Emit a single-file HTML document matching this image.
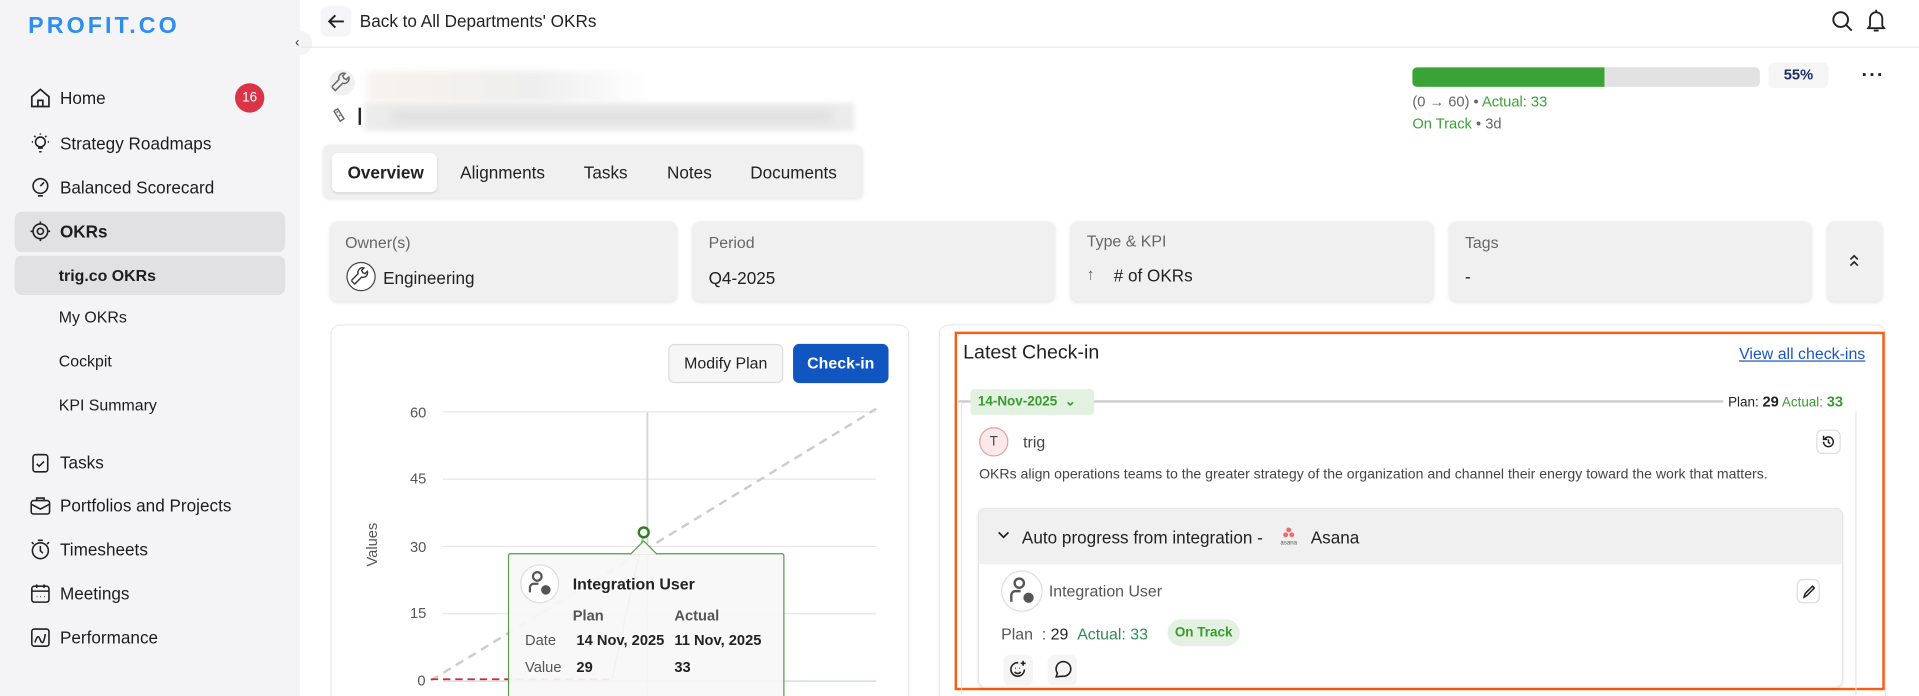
<!DOCTYPE html>
<html><head><meta charset="utf-8"><style>
*{box-sizing:border-box;margin:0;padding:0}
html,body{width:1919px;height:696px;overflow:hidden;background:#fff}
body{font-family:"Liberation Sans",Arial,sans-serif;color:#222}
#w{position:absolute;left:0;top:0;width:1568px;height:569px;transform:scale(1.22385);transform-origin:0 0;overflow:hidden}
.a{position:absolute}
.t{position:absolute;white-space:nowrap;transform:translateY(-50%)}
.side{left:0;top:0;width:245px;height:569px;background:#f4f4f6}
.nav{font-size:14px;color:#1d1d1d;left:49px}
.sub{font-size:13px;color:#1d1d1d;left:48px}
.ic{position:absolute;width:18px;height:18px;transform:translateY(-50%);left:24px}
.card{background:#f0f0f0;border-radius:6px;box-shadow:0 1px 3px rgba(0,0,0,.12);top:181px;height:65px}
.lbl{font-size:13px;color:#666}
.val{font-size:14px;color:#222}
.tab{font-size:14px;color:#222;top:141px}
.grid{position:absolute;left:362px;width:354px;height:1px;background:#e6e6e6}
.yl{font-size:12px;color:#666;right:1212px}
</style></head><body><div id="w">
<div class="a side"></div>
<div class="t" style="left:23px;top:22px;font-size:19px;font-weight:bold;color:#2d8ef0;letter-spacing:2.5px">PR<span style="letter-spacing:2.5px">O</span>FIT.CO</div>
<div class="a" style="left:235px;top:25px;width:20px;height:20px;border-radius:50%;background:#f4f4f6"></div>
<div class="t" style="left:241px;top:35px;font-size:11px;color:#333">‹</div>

<svg class="ic" style="top:80px" viewBox="0 0 18 18" fill="none" stroke="#222" stroke-width="1.4"><path d="M2 8L9 2l7 6v8H2z M7 16v-5h4v5"/></svg>
<div class="t nav" style="top:80px">Home</div>
<div class="a" style="left:192px;top:68px;width:24px;height:24px;border-radius:50%;background:#d93448;color:#fff;font-size:11px;text-align:center;line-height:24px">16</div>
<svg class="ic" style="top:117px" viewBox="0 0 18 18" fill="none" stroke="#222" stroke-width="1.3"><circle cx="9" cy="8" r="4"/><path d="M7 13h4M8 16h2M9 1v1M2 8h1M15 8h1M4 3l1 1M14 3l-1 1"/></svg>
<div class="t nav" style="top:117px">Strategy Roadmaps</div>
<svg class="ic" style="top:153px" viewBox="0 0 18 18" fill="none" stroke="#222" stroke-width="1.3"><circle cx="9" cy="8" r="6"/><path d="M9 8l3-3M7 16h4"/></svg>
<div class="t nav" style="top:153px">Balanced Scorecard</div>
<div class="a" style="left:12px;top:173px;width:221px;height:33px;background:#e1e1e4;border-radius:6px"></div>
<svg class="ic" style="top:189px" viewBox="0 0 18 18" fill="none" stroke="#222" stroke-width="1.3"><circle cx="9" cy="9" r="6"/><circle cx="9" cy="9" r="2.5"/><path d="M9 1v2M9 15v2M1 9h2M15 9h2"/></svg>
<div class="t nav" style="top:189px;font-weight:bold">OKRs</div>
<div class="a" style="left:12px;top:209px;width:221px;height:32px;background:#e1e1e4;border-radius:6px"></div>
<div class="t sub" style="top:225px;font-weight:bold">trig.co OKRs</div>
<div class="t sub" style="top:259px">My OKRs</div>
<div class="t sub" style="top:295px">Cockpit</div>
<div class="t sub" style="top:331px">KPI Summary</div>
<svg class="ic" style="top:378px" viewBox="0 0 18 18" fill="none" stroke="#222" stroke-width="1.3"><rect x="3" y="2.5" width="12" height="14" rx="2"/><path d="M6 2.5h6M6 10l2 2 4-4"/></svg>
<div class="t nav" style="top:378px">Tasks</div>
<svg class="ic" style="top:413px" viewBox="0 0 18 18" fill="none" stroke="#222" stroke-width="1.3"><rect x="1.5" y="5" width="15" height="11" rx="2"/><path d="M6 5V3h6v2M1.5 8l7.5 4 7.5-4"/></svg>
<div class="t nav" style="top:413px">Portfolios and Projects</div>
<svg class="ic" style="top:449px" viewBox="0 0 18 18" fill="none" stroke="#222" stroke-width="1.3"><circle cx="9" cy="10" r="6.5"/><path d="M9 6v4l2 2M7 1.5h4M2 3l1.5 1.5M16 3l-1.5 1.5"/></svg>
<div class="t nav" style="top:449px">Timesheets</div>
<svg class="ic" style="top:485px" viewBox="0 0 18 18" fill="none" stroke="#222" stroke-width="1.3"><rect x="2" y="3" width="14" height="13" rx="2"/><path d="M2 7h14M6 1.5v3M12 1.5v3M6 11.5h.5M9 11.5h.5M12 11.5h.5"/></svg>
<div class="t nav" style="top:485px">Meetings</div>
<svg class="ic" style="top:521px" viewBox="0 0 18 18" fill="none" stroke="#222" stroke-width="1.3"><rect x="2" y="2" width="14" height="14" rx="2"/><path d="M4.5 13c2-6 3-6 4.5-2s3 2 4-5"/></svg>
<div class="t nav" style="top:521px">Performance</div>

<!-- header -->
<div class="a" style="left:262px;top:5px;width:25px;height:25px;background:#f5f5f7;border-radius:6px"></div>
<svg class="a" style="left:267px;top:10px" width="15" height="15" viewBox="0 0 15 15" fill="none" stroke="#222" stroke-width="1.6"><path d="M14 7.5H2M7 2.5l-5 5 5 5"/></svg>
<div class="t" style="left:294px;top:17px;font-size:14px">Back to All Departments' OKRs</div>
<div class="a" style="left:245px;top:38px;width:1323px;height:1px;background:#e8e8e8"></div>
<svg class="a" style="left:1496px;top:8px" width="19" height="19" viewBox="0 0 19 19" fill="none" stroke="#222" stroke-width="1.6"><circle cx="8" cy="8" r="6"/><path d="M12.5 12.5l4.5 4.5"/></svg>
<svg class="a" style="left:1524px;top:6px" width="18" height="21" viewBox="0 0 18 21" fill="none" stroke="#222" stroke-width="1.5"><path d="M9 2v1.5M4 15V9a5 5 0 0110 0v6l1.5 2h-13zM7 19h4"/></svg>

<!-- title -->
<div class="a" style="left:269px;top:57px;width:21px;height:21px;border-radius:50%;background:#f0f0f0"></div>
<svg class="a" style="left:271px;top:59px" width="17" height="17" viewBox="0 0 17 17" fill="none" stroke="#666" stroke-width="1.2"><path d="M3 15l6-6a4 4 0 005-5l-2 2-2-1-1-2 2-2a4 4 0 00-5 5l-6 6z"/></svg>
<svg class="a" style="left:270px;top:86px" width="15" height="15" viewBox="0 0 15 15" fill="none" stroke="#666" stroke-width="1.2"><path d="M3 5l5 8 3-2-5-8-2 1zM5 6l1-1M7 9l1-1"/></svg>
<div class="a" style="left:293px;top:88px;width:1.5px;height:14px;background:#222"></div>
<div class="a" style="left:300px;top:58px;width:230px;height:26px;background:linear-gradient(90deg,#f7f3ee,#eeeeee 60%,#fff);filter:blur(3px)"></div>
<div class="a" style="left:298px;top:84px;width:400px;height:23px;background:#ececec;filter:blur(2px)"></div>
<div class="a" style="left:320px;top:90px;width:360px;height:10px;background:#e0e0e0;filter:blur(4px)"></div>

<!-- tabs -->
<div class="a" style="left:264px;top:118px;width:441px;height:44px;background:#f0f0f0;border-radius:6px;box-shadow:0 1px 3px rgba(0,0,0,.1)"></div>
<div class="a" style="left:271px;top:125px;width:86px;height:32px;background:#fff;border-radius:5px;box-shadow:0 1px 2px rgba(0,0,0,.12)"></div>
<div class="t tab" style="left:284px;font-weight:bold">Overview</div>
<div class="t tab" style="left:376px">Alignments</div>
<div class="t tab" style="left:477px">Tasks</div>
<div class="t tab" style="left:545px">Notes</div>
<div class="t tab" style="left:613px">Documents</div>

<!-- progress -->
<div class="a" style="left:1154px;top:55px;width:284px;height:16px;background:#e2e2e2;border-radius:4px;overflow:hidden"><div style="width:157px;height:16px;background:#3aa335"></div></div>
<div class="a" style="left:1445px;top:51px;width:49px;height:21px;background:#f5f5f5;border-radius:5px;font-size:12px;font-weight:bold;color:#1a2e6b;text-align:center;line-height:21px">55%</div>
<div class="t" style="left:1521px;top:62px;font-size:16px;font-weight:bold;letter-spacing:1px">···</div>
<div class="t" style="left:1154px;top:83px;font-size:12px;color:#666">(0 → 60) • <span style="color:#3aa335">Actual: 33</span></div>
<div class="t" style="left:1154px;top:101px;font-size:12px;color:#666"><span style="color:#3aa335">On Track</span> • 3d</div>

<!-- cards -->
<div class="a card" style="left:270px;width:283px"></div>
<div class="t lbl" style="left:282px;top:198px">Owner(s)</div>
<div class="a" style="left:283px;top:214px;width:24px;height:24px;border-radius:50%;border:1px solid #444;background:#fff"></div>
<svg class="a" style="left:287px;top:218px" width="16" height="16" viewBox="0 0 17 17" fill="none" stroke="#333" stroke-width="1.2"><path d="M3 15l6-6a4 4 0 005-5l-2 2-2-1-1-2 2-2a4 4 0 00-5 5l-6 6z"/></svg>
<div class="t val" style="left:313px;top:227px">Engineering</div>
<div class="a card" style="left:566px;width:296px"></div>
<div class="t lbl" style="left:579px;top:198px">Period</div>
<div class="t val" style="left:579px;top:227px">Q4-2025</div>
<div class="a card" style="left:875px;width:296px"></div>
<div class="t lbl" style="left:888px;top:197px">Type &amp; KPI</div>
<div class="t" style="left:888px;top:224px;font-size:13px;color:#666">↑</div>
<div class="t val" style="left:910px;top:225px">#&nbsp;of OKRs</div>
<div class="a card" style="left:1184px;width:296px"></div>
<div class="t lbl" style="left:1197px;top:198px">Tags</div>
<div class="t val" style="left:1197px;top:226px">-</div>
<div class="a card" style="left:1493px;width:45px"></div>
<svg class="a" style="left:1510px;top:206px" width="10" height="14" viewBox="0 0 10 14" fill="none" stroke="#222" stroke-width="1.4"><path d="M2 6l3-3 3 3M2 11l3-3 3 3"/></svg>

<!-- chart panel -->
<div class="a" style="left:270px;top:265px;width:473px;height:320px;border:1px solid #e8e8e8;border-radius:8px"></div>
<div class="a" style="left:546px;top:281px;width:94px;height:32px;background:#f6f6f7;border:1px solid #dcdcdc;border-radius:5px;font-size:13px;text-align:center;line-height:30px">Modify Plan</div>
<div class="a" style="left:648px;top:281px;width:78px;height:32px;background:#1055c0;border-radius:5px;font-size:13px;color:#fff;text-align:center;line-height:32px;font-weight:bold">Check-in</div>
<div class="grid" style="top:336px"></div><div class="grid" style="top:391px"></div><div class="grid" style="top:446px"></div><div class="grid" style="top:501px"></div>
<div class="grid" style="top:556px;background:#ccd3e6"></div>
<div class="t" style="left:335px;top:337px;font-size:12px;color:#555">60</div>
<div class="t" style="left:335px;top:391px;font-size:12px;color:#555">45</div>
<div class="t" style="left:335px;top:447px;font-size:12px;color:#555">30</div>
<div class="t" style="left:335px;top:501px;font-size:12px;color:#555">15</div>
<div class="t" style="left:341px;top:556px;font-size:12px;color:#555">0</div>
<div class="t" style="left:286px;top:445px;font-size:12px;color:#555;transform:translateY(-50%) rotate(-90deg)">Values</div>
<svg class="a" style="left:0;top:0" width="760" height="569">
<line x1="529" y1="337" x2="529" y2="569" stroke="#d4d4d4" stroke-width="1.5"/>
<line x1="352" y1="556" x2="716" y2="334" stroke="#ccc" stroke-width="2" stroke-dasharray="7,5"/>
<line x1="352" y1="555" x2="500" y2="555" stroke="#d62828" stroke-width="1.5" stroke-dasharray="6,4"/>
<line x1="500" y1="555" x2="526" y2="436" stroke="#9cc98e" stroke-width="1.5"/>
<circle cx="526" cy="435" r="4" fill="#fff" stroke="#2e7d1f" stroke-width="2"/>
</svg>
<div class="a" style="left:415px;top:452px;width:226px;height:130px;background:rgba(247,247,247,.93);border:1px solid #5a9a4a;border-radius:2px"></div>
<svg class="a" style="left:515px;top:441px" width="22" height="13"><path d="M0 12L11 1 22 12" fill="#f7f7f7" stroke="#5a9a4a"/></svg>
<div class="a" style="left:425px;top:461px;width:32px;height:32px;border-radius:50%;border:1px solid #ddd;background:#fff"></div>
<svg class="a" style="left:429px;top:465px" width="24" height="24" viewBox="0 0 24 24" fill="none" stroke="#555" stroke-width="1.8"><circle cx="10" cy="6" r="3.5"/><path d="M4 19v-4a3 3 0 013-3h4"/><circle cx="17" cy="17" r="3" fill="#555"/></svg>
<div class="t" style="left:468px;top:477px;font-size:13px;font-weight:bold">Integration User</div>
<div class="t" style="left:468px;top:503px;font-size:12px;color:#555;font-weight:bold">Plan</div>
<div class="t" style="left:551px;top:503px;font-size:12px;color:#555;font-weight:bold">Actual</div>
<div class="t" style="left:429px;top:523px;font-size:12px;color:#555">Date</div>
<div class="t" style="left:471px;top:523px;font-size:12px;font-weight:bold">14 Nov, 2025</div>
<div class="t" style="left:551px;top:523px;font-size:12px;font-weight:bold">11 Nov, 2025</div>
<div class="t" style="left:429px;top:545px;font-size:12px;color:#555">Value</div>
<div class="t" style="left:471px;top:545px;font-size:12px;font-weight:bold">29</div>
<div class="t" style="left:551px;top:545px;font-size:12px;font-weight:bold">33</div>

<!-- right panel -->
<div class="a" style="left:767px;top:265px;width:774px;height:320px;border:1px solid #e8e8e8;border-radius:8px"></div>
<div class="a" style="left:780px;top:271px;width:760px;height:293px;border:2px solid #f95c14"></div>
<div class="t" style="left:787px;top:289px;font-size:16px">Latest Check-in</div>
<div class="t" style="left:1421px;top:289px;font-size:13px;color:#1a56c0;text-decoration:underline">View all check-ins</div>
<div class="a" style="left:785px;top:328px;width:732px;height:240px;border:1px solid #e4e4e4;border-bottom:none;border-radius:4px 4px 0 0"></div>
<div class="a" style="left:783px;top:327px;width:734px;height:1.5px;background:#cfcfcf"></div>
<div class="a" style="left:793px;top:318px;width:101px;height:21px;background:#e3f1e0;border-radius:3px"></div>
<div class="t" style="left:799px;top:328px;font-size:11px;font-weight:bold;color:#3a9a32">14-Nov-2025 &nbsp;⌄</div>
<div class="a" style="left:1408px;top:320px;width:114px;height:16px;background:#fff"></div>
<div class="t" style="left:1412px;top:328px;font-size:11px">Plan: <b style="font-size:12px">29</b> <span style="color:#3a9a32">Actual: <b style="font-size:12px">33</b></span></div>
<div class="a" style="left:800px;top:349px;width:24px;height:24px;border-radius:50%;background:#fbe9ea;border:1px solid #e4a0a6;font-size:11px;text-align:center;line-height:22px;color:#444">T</div>
<div class="t" style="left:836px;top:361px;font-size:13px;color:#444">trig</div>
<div class="a" style="left:1484px;top:351px;width:20px;height:20px;border:1px solid #ddd;border-radius:5px"></div>
<svg class="a" style="left:1488px;top:355px" width="12" height="12" viewBox="0 0 12 12" fill="none" stroke="#222" stroke-width="1.2"><path d="M2 6a4 4 0 104-4 4 4 0 00-3 1.5M2 1v3h3M6 4v2.5l1.5 1"/></svg>
<div class="t" style="left:800px;top:388px;font-size:11.5px;color:#444">OKRs align operations teams to the greater strategy of the organization and channel their energy toward the work that matters.</div>
<div class="a" style="left:799px;top:415px;width:707px;height:147px;border:1px solid #e5e5e5;border-radius:6px;box-shadow:0 1px 2px rgba(0,0,0,.08);overflow:hidden"><div style="height:45px;background:#f0f0f0"></div></div>
<svg class="a" style="left:815px;top:434px" width="10" height="7" viewBox="0 0 10 7" fill="none" stroke="#222" stroke-width="1.4"><path d="M1 1l4 4 4-4"/></svg>
<div class="t" style="left:835px;top:439px;font-size:14px">Auto progress from integration -</div>
<svg class="a" style="left:1043px;top:430px" width="20" height="16" viewBox="0 0 20 16"><circle cx="10" cy="3" r="2" fill="#f06a6a"/><circle cx="7.5" cy="7" r="2" fill="#f06a6a"/><circle cx="12.5" cy="7" r="2" fill="#f06a6a"/><text x="10" y="15" font-size="5" text-anchor="middle" fill="#555" font-family="Liberation Sans">asana</text></svg>
<div class="t" style="left:1071px;top:439px;font-size:14px">Asana</div>
<div class="a" style="left:818px;top:466px;width:34px;height:34px;border-radius:50%;border:1px solid #ddd;background:#fff"></div>
<svg class="a" style="left:822px;top:469px" width="26" height="28" viewBox="0 0 24 24" fill="none" stroke="#555" stroke-width="1.8"><circle cx="10" cy="6" r="3.5"/><path d="M4 20v-5a3 3 0 013-3h4"/><circle cx="17" cy="17" r="3" fill="#555"/></svg>
<div class="t" style="left:857px;top:483px;font-size:13px;color:#555">Integration User</div>
<div class="a" style="left:1468px;top:473px;width:19px;height:20px;border:1px solid #ddd;border-radius:5px"></div>
<svg class="a" style="left:1472px;top:477px" width="11" height="12" viewBox="0 0 11 12" fill="none" stroke="#222" stroke-width="1.2"><path d="M2 11l1-3 6-6 1.5 1.5-6 6zM2 11h0"/></svg>
<div class="t" style="left:818px;top:518px;font-size:13px;color:#555">Plan &nbsp;: <span style="color:#222">29</span> &nbsp;<span style="color:#2e8b57">Actual: 33</span></div>
<div class="a" style="left:954px;top:506px;width:59px;height:22px;background:#e3f1e0;border-radius:11px;font-size:11px;font-weight:bold;color:#3a9a32;text-align:center;line-height:22px">On Track</div>
<div class="a" style="left:820px;top:535px;width:24px;height:25px;background:#f5f5f5;border-radius:5px"></div>
<svg class="a" style="left:824px;top:539px" width="16" height="16" viewBox="0 0 16 16" fill="none" stroke="#222" stroke-width="1.3"><path d="M13 8a5.5 5.5 0 11-5-5.5"/><path d="M12 1v4M10 3h4M5.5 7h.5M9 7h.5M5 10c1.5 1.8 3.5 1.8 5 0"/></svg>
<div class="a" style="left:856px;top:535px;width:24px;height:25px;background:#f5f5f5;border-radius:5px"></div>
<svg class="a" style="left:860px;top:539px" width="16" height="16" viewBox="0 0 16 16" fill="none" stroke="#222" stroke-width="1.3"><path d="M3 14l1-3a6 6 0 114 2.5z"/></svg>
</div></body></html>
